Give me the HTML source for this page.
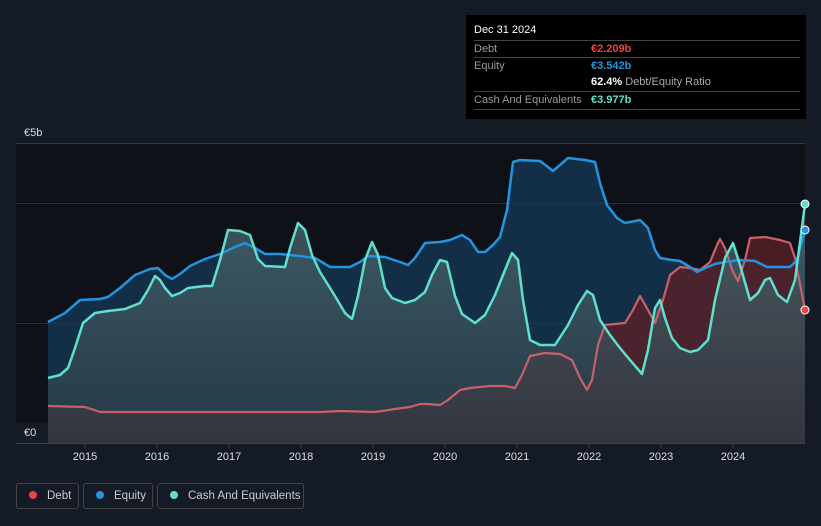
<!DOCTYPE html><html><head><style>
body{margin:0;background:#151b26;width:821px;height:526px;overflow:hidden;font-family:"Liberation Sans",sans-serif;position:relative}
.tt{position:absolute;left:466px;top:15px;width:340px;height:104px;background:#000;color:#fff;font-size:11px}
.row{position:absolute;left:8px;right:6px;border-top:1px solid #444;height:17px;line-height:17px;color:#999}
.v{position:absolute;left:117px;font-weight:bold}
.lg{position:absolute;top:483px;height:26px;border:1px solid #444;border-radius:3px;color:#ccc;font-size:11.5px;line-height:25px;box-sizing:border-box;white-space:nowrap}
.dot{display:inline-block;width:8px;height:8px;border-radius:50%;margin:0 10px 0 12px;vertical-align:0px}
</style></head><body>
<svg width="821" height="526" style="position:absolute;left:0;top:0">
<defs>
<linearGradient id="cg" x1="0" y1="0" x2="0" y2="1"><stop offset="0" stop-color="#4a6a70" stop-opacity=".9"/><stop offset="1" stop-color="#2c3a44" stop-opacity=".9"/></linearGradient>
</defs>
<rect x="16" y="143" width="789" height="300" fill="#0e1118"/>
<line x1="16" y1="143.5" x2="805" y2="143.5" stroke="#333a44"/>
<line x1="16" y1="203.5" x2="805" y2="203.5" stroke="#2a303a"/>
<line x1="16" y1="323.5" x2="805" y2="323.5" stroke="#2a303a"/>
<g id="eq">
<polygon fill="#163a58" fill-opacity=".75" points="48,443 48,322 65,313 80,300 100,299 108,297 120,288 135,275 150,269 158,268 165,275 172,279 180,274 190,266 205,259 220,254 235,247 245,243 255,248 265,254 280,254 300,256 315,258 330,267 350,267 360,262 368,256 385,257 400,262 408,265 415,258 425,243 440,242 450,240 462,235 470,240 478,252 485,252 493,245 500,237 507,210 513,162 520,160 540,161 548,167 553,171 560,165 568,158 585,160 595,162 600,183 607,205 617,218 625,223 640,220 648,228 655,250 660,258 672,260 680,261 690,267 697,272 705,268 715,264 725,262 740,260 755,261 767,267 790,267 797,260 805,230 805,443"/>
<polygon fill="#5a2028" fill-opacity=".8" points="48,443 48,406 85,407 100,412 320,412 340,411 375,412 395,409 410,407 420,404 428,404 440,405 448,400 460,390 470,388 490,386 505,386 515,388 522,375 530,356 545,353 560,354 572,360 580,378 587,390 592,380 598,345 605,325 625,323 633,310 640,296 648,310 655,323 663,300 670,275 680,267 690,268 700,270 710,262 717,245 720,239 725,248 733,272 738,281 745,260 750,238 765,237 780,240 790,243 795,258 805,310 805,443"/>
<polygon fill="url(#cg)" fill-opacity=".85" points="48,443 48,378 60,375 68,368 75,348 83,323 95,313 108,311 125,309 140,303 148,290 155,276 160,280 165,288 172,296 180,293 188,288 205,286 212,286 220,260 228,230 240,231 250,235 258,259 265,266 285,267 290,248 298,223 305,230 312,255 320,272 335,296 345,313 352,319 358,296 365,260 372,242 378,255 385,288 392,298 405,303 415,300 425,292 432,275 440,260 447,262 455,296 462,314 475,323 485,315 495,295 505,270 512,253 518,260 523,300 530,340 540,345 555,345 568,325 578,305 587,291 593,295 600,320 610,335 620,348 630,360 642,374 648,350 655,308 660,300 665,318 672,338 680,348 690,352 698,350 708,340 715,300 725,258 733,243 740,265 750,300 758,293 765,280 770,278 778,295 787,302 795,280 805,204 805,443"/>
</g>
<polyline fill="none" stroke="#c8606a" stroke-width="2.2" stroke-linejoin="round" points="48,406 85,407 100,412 320,412 340,411 375,412 395,409 410,407 420,404 428,404 440,405 448,400 460,390 470,388 490,386 505,386 515,388 522,375 530,356 545,353 560,354 572,360 580,378 587,390 592,380 598,345 605,325 625,323 633,310 640,296 648,310 655,323 663,300 670,275 680,267 690,268 700,270 710,262 717,245 720,239 725,248 733,272 738,281 745,260 750,238 765,237 780,240 790,243 795,258 805,310"/>
<polyline fill="none" stroke="#2394e0" stroke-width="2.5" stroke-linejoin="round" points="48,322 65,313 80,300 100,299 108,297 120,288 135,275 150,269 158,268 165,275 172,279 180,274 190,266 205,259 220,254 235,247 245,243 255,248 265,254 280,254 300,256 315,258 330,267 350,267 360,262 368,256 385,257 400,262 408,265 415,258 425,243 440,242 450,240 462,235 470,240 478,252 485,252 493,245 500,237 507,210 513,162 520,160 540,161 548,167 553,171 560,165 568,158 585,160 595,162 600,183 607,205 617,218 625,223 640,220 648,228 655,250 660,258 672,260 680,261 690,267 697,272 705,268 715,264 725,262 740,260 755,261 767,267 790,267 797,260 805,230"/>
<polyline fill="none" stroke="#5fe0cc" stroke-width="2.5" stroke-linejoin="round" points="48,378 60,375 68,368 75,348 83,323 95,313 108,311 125,309 140,303 148,290 155,276 160,280 165,288 172,296 180,293 188,288 205,286 212,286 220,260 228,230 240,231 250,235 258,259 265,266 285,267 290,248 298,223 305,230 312,255 320,272 335,296 345,313 352,319 358,296 365,260 372,242 378,255 385,288 392,298 405,303 415,300 425,292 432,275 440,260 447,262 455,296 462,314 475,323 485,315 495,295 505,270 512,253 518,260 523,300 530,340 540,345 555,345 568,325 578,305 587,291 593,295 600,320 610,335 620,348 630,360 642,374 648,350 655,308 660,300 665,318 672,338 680,348 690,352 698,350 708,340 715,300 725,258 733,243 740,265 750,300 758,293 765,280 770,278 778,295 787,302 795,280 805,204"/>
<circle cx="805" cy="204" r="4" fill="#5fe0cc" stroke="#fff" stroke-width="1"/>
<circle cx="805" cy="230" r="4" fill="#2394e0" stroke="#fff" stroke-width="1"/>
<circle cx="805" cy="310" r="4" fill="#e84545" stroke="#fff" stroke-width="1"/>
<line x1="16" y1="443.5" x2="805" y2="443.5" stroke="#3a414c"/>
<g stroke="#3a414c"><line x1="85" y1="443" x2="85" y2="448"/><line x1="157" y1="443" x2="157" y2="448"/><line x1="229" y1="443" x2="229" y2="448"/><line x1="301" y1="443" x2="301" y2="448"/><line x1="373" y1="443" x2="373" y2="448"/><line x1="445" y1="443" x2="445" y2="448"/><line x1="517" y1="443" x2="517" y2="448"/><line x1="589" y1="443" x2="589" y2="448"/><line x1="661" y1="443" x2="661" y2="448"/><line x1="733" y1="443" x2="733" y2="448"/></g>
<g fill="#ddd" font-size="11" text-anchor="middle" font-family="Liberation Sans"><text x="85" y="460">2015</text><text x="157" y="460">2016</text><text x="229" y="460">2017</text><text x="301" y="460">2018</text><text x="373" y="460">2019</text><text x="445" y="460">2020</text><text x="517" y="460">2021</text><text x="589" y="460">2022</text><text x="661" y="460">2023</text><text x="733" y="460">2024</text></g>
<rect x="16" y="423" width="32" height="20" fill="#151b26"/>
<text x="24" y="136" fill="#ddd" font-size="11" font-family="Liberation Sans">€5b</text>
<text x="24" y="436" fill="#ddd" font-size="11" font-family="Liberation Sans">€0</text>
</svg>
<div class="tt">
<div style="position:absolute;left:8px;top:9px;font-size:11px">Dec 31 2024</div>
<div class="row" style="top:25px">Debt<span class="v" style="color:#e84545">€2.209b</span></div>
<div class="row" style="top:42px">Equity<span class="v" style="color:#2394e0">€3.542b</span></div>
<div class="row" style="top:59px;border-top:none"><span class="v" style="color:#fff">62.4% <span style="font-weight:normal;color:#aaa">Debt/Equity Ratio</span></span></div>
<div class="row" style="top:76px">Cash And Equivalents<span class="v" style="color:#5fe0cc">€3.977b</span></div>
<div class="row" style="top:94px;height:0"></div>
</div>
<div class="lg" style="left:16px;width:63px"><span class="dot" style="background:#e84545"></span>Debt</div>
<div class="lg" style="left:83px;width:70px"><span class="dot" style="background:#2394e0"></span>Equity</div>
<div class="lg" style="left:157px;width:147px"><span class="dot" style="background:#5fe0cc"></span>Cash And Equivalents</div>
</body></html>
